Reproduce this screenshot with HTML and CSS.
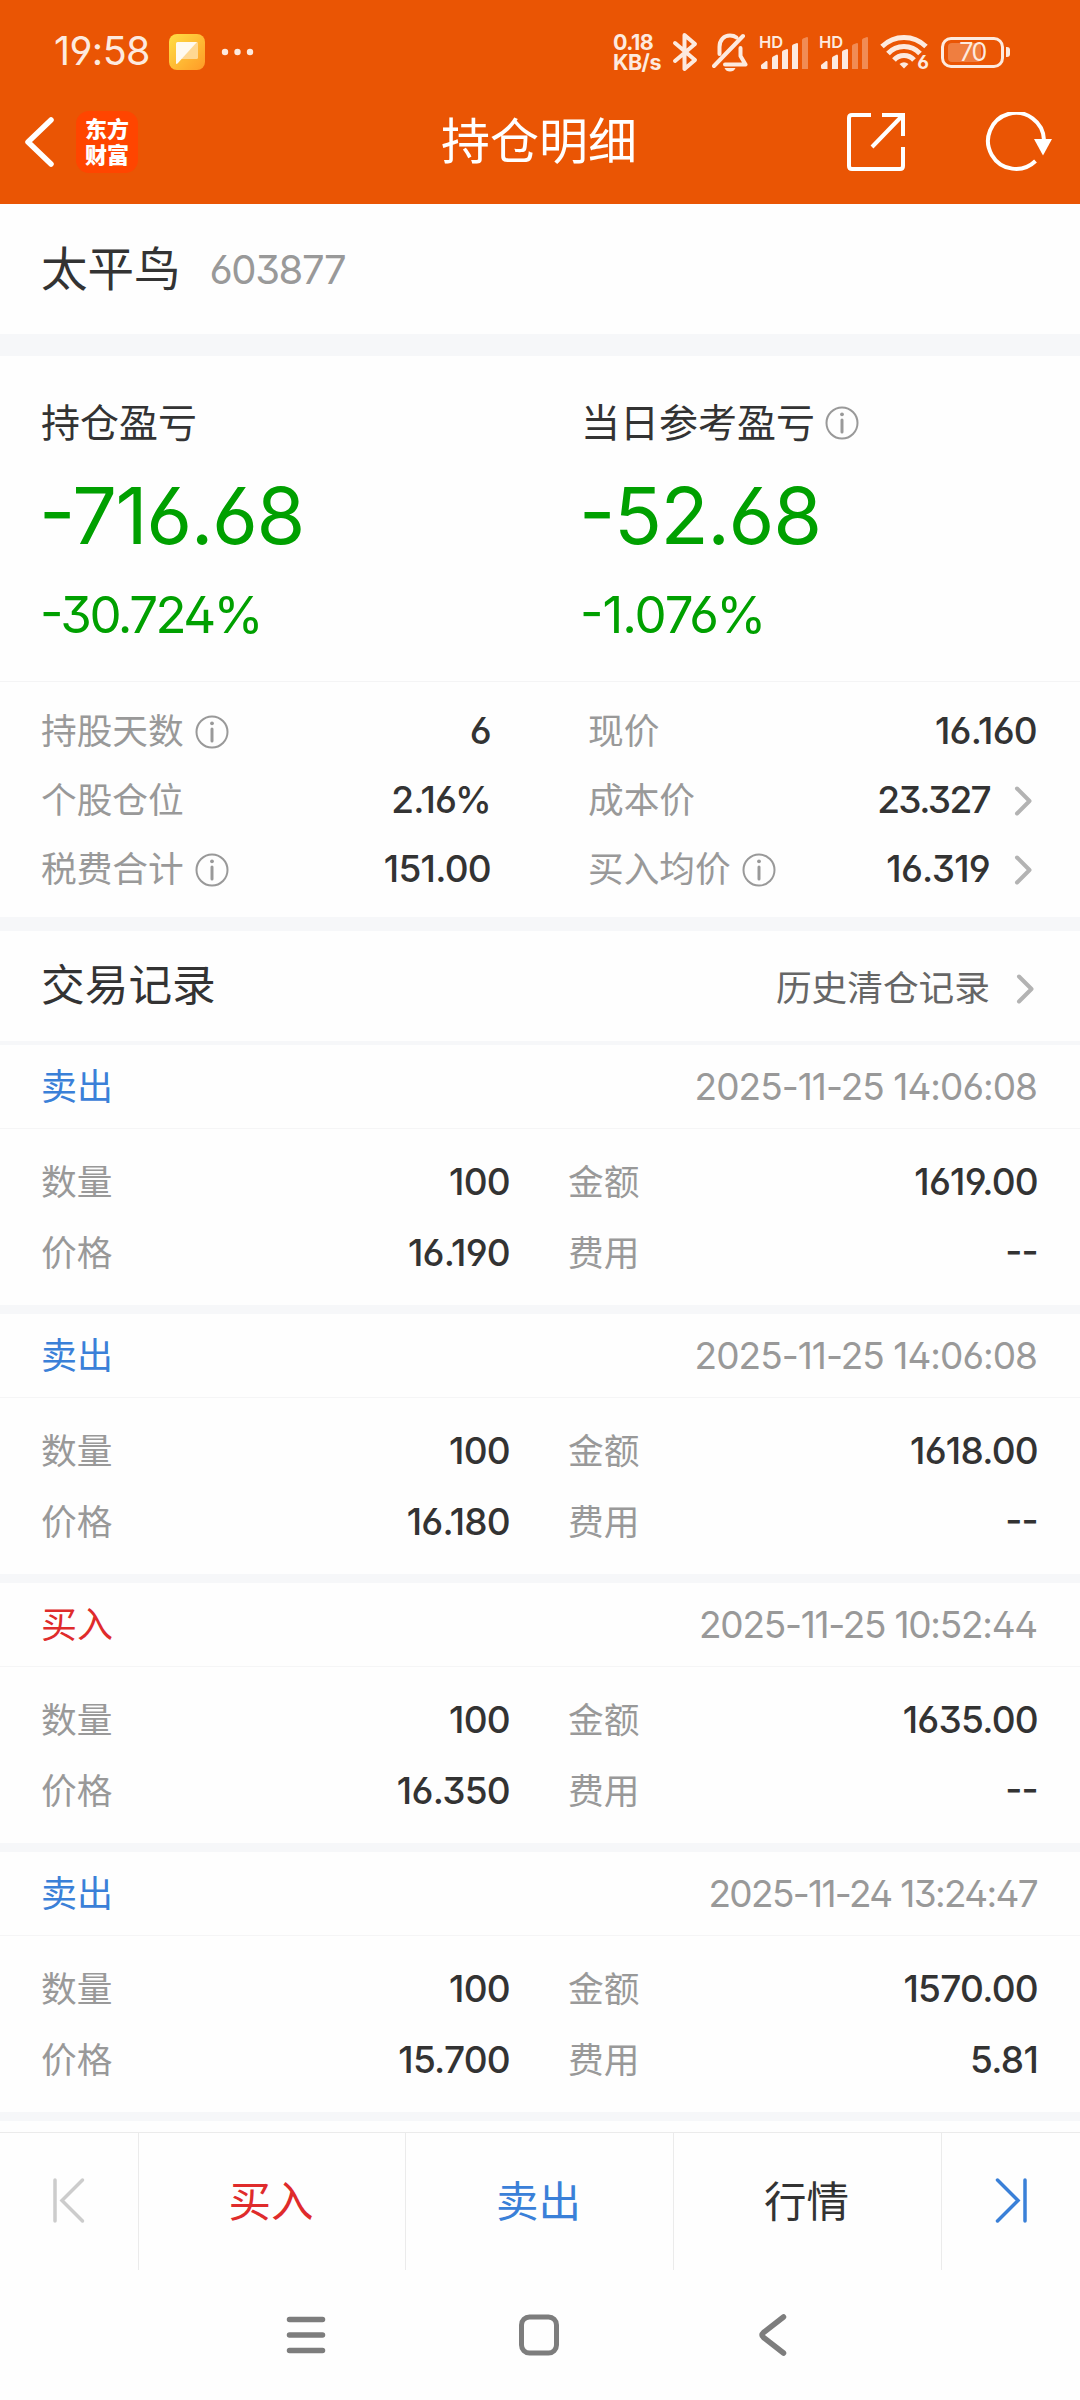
FILE: index.html
```html
<!DOCTYPE html>
<html lang="zh-CN">
<head>
<meta charset="utf-8">
<title>持仓明细</title>
<link rel="stylesheet" href="styles.css">
</head>
<body>
<svg class="defs" width="0" height="0" aria-hidden="true">
  <symbol id="info" viewBox="0 0 34 34">
    <circle cx="17" cy="17" r="15.500" fill="none" stroke="#999" stroke-width="2"/>
    <circle cx="17" cy="8.300" r="1.900" fill="#999"/>
    <path d="M17 14v12" stroke="#999" stroke-width="3" stroke-linecap="round"/>
  </symbol>
  <symbol id="chevron" viewBox="0 0 18 32">
    <path d="M3 3.500L15.500 16L3 28.500" fill="none" stroke="#b3b3b3" stroke-width="4" stroke-linecap="round" stroke-linejoin="round"/>
  </symbol>
</svg>

<header class="header">
  <div class="status">
    <span class="clock">19:58</span>
    <svg class="note" width="36" height="36" viewBox="0 0 36 36">
      <defs><linearGradient id="g" x1="0" y1="0" x2="1" y2="1"><stop offset="0" stop-color="#ffdf45"/><stop offset="1" stop-color="#ff9a26"/></linearGradient></defs>
      <rect width="36" height="36" rx="8" fill="url(#g)"/>
      <path d="M12 25L27 8h1q1 0 1 1.500V23.500q0 1.500-1.500 1.500z" fill="#ffd891"/>
      <path d="M7 9.500Q7 8 8.500 8H28L8.500 29.500q-1.500 1-1.500-.5z" fill="#fffaf0"/>
    </svg>
    <svg class="dots" width="34" height="8" viewBox="0 0 34 8" fill="#fdeadf"><circle cx="4" cy="4" r="3.200"/><circle cx="16.500" cy="4" r="3.200"/><circle cx="29" cy="4" r="3.200"/></svg>
    <div class="rate"><span>0.18</span><span>KB/s</span></div>
    <svg class="bt" width="26" height="40" viewBox="0 0 26 40" fill="none" stroke="#fdeadf" stroke-width="4" stroke-linejoin="round" stroke-linecap="round"><path d="M3 11L23 28L12.500 37V3L23 12L3 29"/></svg>
    <svg class="bell" width="36" height="40" viewBox="0 0 36 40" fill="none" stroke="#fdeadf" stroke-width="4" stroke-linecap="round" stroke-linejoin="round">
      <path d="M2 34L31 4"/><path d="M7.500 22V15C7.500 8 12 3.500 18 3.500q4 0 6.500 2"/><path d="M28.500 16v8l5 8.500H13"/><path d="M12.500 36h11q-1.500 3.500-5.500 3.500t-5.500-3.500z" fill="#fdeadf" stroke="none"/>
    </svg>
    <div class="signal">
      <span class="hd">HD</span>
      <svg width="50" height="36" viewBox="0 0 50 36" fill="#fdeadf"><path d="M2 31l5-4q1.500-.5 1.500 1v7H3.500Q2 35 2 33.500zM13 24q0-1 1-1.500l4-2q1 0 1 1.500v13h-6zM23 18q0-1 1-1.500l4-1.500q1 0 1 1V35h-6zM33 12q0-1 1-1.500l4-1.500q1 0 1 1V35h-6z"/><path d="M43 6q0-1 1-1.500l4-1.500q1 0 1 1V35h-6z" fill-opacity=".37"/></svg>
    </div>
    <div class="signal">
      <span class="hd">HD</span>
      <svg width="50" height="36" viewBox="0 0 50 36" fill="#fdeadf"><path d="M2 31l5-4q1.500-.5 1.500 1v7H3.500Q2 35 2 33.500zM13 24q0-1 1-1.500l4-2q1 0 1 1.500v13h-6zM23 18q0-1 1-1.500l4-1.500q1 0 1 1V35h-6z"/><path d="M33 12q0-1 1-1.500l4-1.500q1 0 1 1V35h-6zM43 6q0-1 1-1.500l4-1.500q1 0 1 1V35h-6z" fill-opacity=".37"/></svg>
    </div>
    <div class="wifi">
      <svg width="48" height="36" viewBox="0 0 48 36" fill="none" stroke="#fdeadf" stroke-width="5"><path d="M2 12.500Q11.500 3.500 24 3.500T46 12.500"/><path d="M8 19.500Q14.500 12.500 24 12.500T40 19.500"/><path d="M14 26Q18 21.500 24 21.500T34 26"/><path d="M19.500 30Q24 26.500 28.500 30L24 34.500z" fill="#fdeadf" stroke="none"/></svg>
      <span>6</span>
    </div>
    <div class="battery"><i class="level"></i><span>70</span></div>
    <i class="nub"></i>
  </div>
  <nav class="titlebar">
    <svg class="back" width="34" height="52" viewBox="0 0 34 52"><path d="M29 4L6 26L29 48" fill="none" stroke="#fff" stroke-width="5.500" stroke-linecap="round" stroke-linejoin="round"/></svg>
    <div class="logo"><span>东方</span><span>财富</span></div>
    <h1>持仓明细</h1>
    <svg class="share" width="60" height="60" viewBox="0 0 60 60" fill="none" stroke="#fff" stroke-width="4"><path d="M25 3H6Q3 3 3 6V54Q3 57 6 57H54Q57 57 57 54V35"/><path d="M36 3H57V24M56 4L26 35"/></svg>
    <svg class="refresh" width="68" height="60" viewBox="0 0 68 60"><path d="M50.500 49A28 28 0 1 1 59 28" fill="none" stroke="#fff" stroke-width="4"/><path d="M49 27H67L58 43.500z" fill="#fff"/></svg>
  </nav>
</header>

<section class="stock"><span class="name">太平鸟</span><span class="code">603877</span></section>

<section class="profit">
  <div><h2>持仓盈亏</h2><p class="big">-716.68</p><p class="pct">-30.724%</p></div>
  <div><h2>当日参考盈亏<svg class="info"><use href="#info"/></svg></h2><p class="big">-52.68</p><p class="pct wide">-1.076%</p></div>
</section>

<section class="detail">
  <div class="row"><span>持股天数</span><svg class="info"><use href="#info"/></svg><b>6</b></div>
  <div class="row"><span>现价</span><b>16.160</b></div>
  <div class="row"><span>个股仓位</span><b>2.16%</b></div>
  <div class="row link"><span>成本价</span><b class="tight">23.327</b><svg class="chev"><use href="#chevron"/></svg></div>
  <div class="row"><span>税费合计</span><svg class="info"><use href="#info"/></svg><b>151.00</b></div>
  <div class="row link"><span>买入均价</span><svg class="info"><use href="#info"/></svg><b>16.319</b><svg class="chev"><use href="#chevron"/></svg></div>
</section>

<section class="history"><h3>交易记录</h3><a>历史清仓记录<svg class="chev"><use href="#chevron"/></svg></a></section>

<main class="records">
  <article class="record">
    <header><span class="sell">卖出</span><time>2025-11-25 14:06:08</time></header>
    <dl><dt>数量</dt><dd>100</dd><dt>金额</dt><dd>1619.00</dd><dt>价格</dt><dd>16.190</dd><dt>费用</dt><dd class="none">--</dd></dl>
  </article>
  <article class="record">
    <header><span class="sell">卖出</span><time>2025-11-25 14:06:08</time></header>
    <dl><dt>数量</dt><dd>100</dd><dt>金额</dt><dd>1618.00</dd><dt>价格</dt><dd>16.180</dd><dt>费用</dt><dd class="none">--</dd></dl>
  </article>
  <article class="record">
    <header><span class="buy">买入</span><time class="snug">2025-11-25 10:52:44</time></header>
    <dl><dt>数量</dt><dd>100</dd><dt>金额</dt><dd>1635.00</dd><dt>价格</dt><dd>16.350</dd><dt>费用</dt><dd class="none">--</dd></dl>
  </article>
  <article class="record">
    <header><span class="sell">卖出</span><time class="tight">2025-11-24 13:24:47</time></header>
    <dl><dt>数量</dt><dd>100</dd><dt>金额</dt><dd>1570.00</dd><dt>价格</dt><dd>15.700</dd><dt>费用</dt><dd>5.81</dd></dl>
  </article>
</main>

<footer class="toolbar">
  <div class="cell first"><svg width="36" height="50" viewBox="0 0 36 50" fill="none" stroke="#ccc" stroke-width="3.500" stroke-linecap="round"><path d="M4 5V46M31.500 5L11 25.500L31.500 46"/></svg></div>
  <div class="cell buy">买入</div>
  <div class="cell sell">卖出</div>
  <div class="cell">行情</div>
  <div class="cell last"><svg width="36" height="50" viewBox="0 0 36 50" fill="none" stroke="#3a80d8" stroke-width="3.500" stroke-linecap="round"><path d="M32 5V46M4.500 5L25 25.500L4.500 46"/></svg></div>
</footer>

<nav class="sysnav">
  <svg width="42" height="44" viewBox="0 0 42 44" stroke="#7d7d7d" stroke-width="5.500" stroke-linecap="round"><path d="M4.500 6.500h33M4.500 22h33M4.500 37.500h33"/></svg>
  <svg class="home" width="42" height="44" viewBox="0 0 42 44" fill="none" stroke="#7d7d7d" stroke-width="5"><rect x="3.500" y="4" width="35" height="36" rx="8"/></svg>
  <svg width="30" height="44" viewBox="0 0 30 44" fill="none" stroke="#7d7d7d" stroke-width="5.500" stroke-linecap="round" stroke-linejoin="round"><path d="M25.500 4L5.500 19.500Q2.500 22 5.500 24.500L25.500 40"/></svg>
</nav>
</body>
</html>
```
FILE: styles.css
```css
* { box-sizing: border-box; margin: 0; padding: 0; }
body {
  width: 1080px; height: 2400px; overflow: hidden;
  display: flex; flex-direction: column;
  background: #fefefe; color: #333;
  font-family: Inter, "Noto Sans CJK SC", sans-serif;
  font-feature-settings: "ss01";
  font-size: 36px; line-height: 1.3;
}
h1, h2, h3, b { font-weight: 400; }
svg { display: block; flex: none; }
.defs { position: absolute; }
.info { width: 34px; height: 34px; }
.chev { width: 18px; height: 32px; }
.sell { color: #3a80d8; }
.buy { color: #df2b2b; }

/* header */
.header { height: 204px; background: #ea5504; color: #fff; }
.status { height: 80px; padding: 24px 0 0 54px; display: flex; align-items: center; color: #fdeadf; }
.clock { width: 115px; font-size: 39.5px; letter-spacing: -0.015em; }
.dots { margin-left: 16px; }
.rate { width: 58px; margin-left: 358px; display: flex; flex-direction: column; font-size: 21.5px; line-height: 20px; font-weight: 700; letter-spacing: -0.025em; }
.bt { margin-left: 1px; }
.bell { margin-left: 14px; }
.signal { width: 50px; height: 36px; margin-left: 11px; display: grid; }
.signal > * { grid-area: 1 / 1; }
.signal + .signal { margin-left: 10px; }
.hd { font-size: 16.5px; line-height: 16px; font-weight: 600; }
.wifi { width: 48px; height: 36px; margin-left: 11px; display: grid; }
.wifi > * { grid-area: 1 / 1; }
.wifi span { justify-self: end; align-self: end; font-size: 19px; line-height: 14px; font-weight: 700; margin-right: -1px; }
.battery { width: 63px; height: 31px; margin-left: 13px; border: 3px solid #fdeadf; border-radius: 10px; display: grid; align-items: center; padding: 0 4px; }
.battery > * { grid-area: 1 / 1; }
.battery span { text-align: center; font-size: 25px; line-height: 25px; letter-spacing: -0.06em; }
.level { width: 33px; height: 19px; border-radius: 4px; background: rgba(253, 234, 223, .28); }
.nub { width: 4px; height: 10px; margin-left: 2px; border-radius: 0 3px 3px 0; background: #fdeadf; }

.titlebar { height: 124px; padding-left: 22px; display: grid; grid-template-columns: 54px 365px 405px 139px 1fr; align-items: center; }
.logo { width: 62px; height: 62px; border-radius: 13px; background: #ff4500; display: flex; flex-direction: column; align-items: center; justify-content: center; }
.logo span { font-size: 22px; line-height: 26px; font-weight: 900; }
h1 { font-size: 49px; line-height: 60px; }

.stock { height: 152px; padding: 1px 0 22px 41px; display: flex; align-items: center; gap: 29px; box-shadow: inset 0 -22px #f6f7f9; }
.name { font-size: 46.5px; }
.code { font-size: 40px; letter-spacing: -0.035em; color: #999; }

.profit { height: 326px; padding: 42px 0 0 41px; display: grid; grid-template-columns: 540px 1fr; border-bottom: 1px solid #f4f4f5; }
h2 { display: flex; align-items: center; gap: 10px; font-size: 39px; line-height: 50px; }
.big, .pct { color: #00a000; font-feature-settings: "ss01", "case"; }
.big { font-size: 79px; line-height: 96px; letter-spacing: -0.018em; margin-top: 19px; margin-left: -2px; }
.pct { font-size: 51px; line-height: 62px; letter-spacing: -0.05em; margin-top: 21px; margin-left: -1px; }
.pct.wide { letter-spacing: -0.02em; }

.detail { height: 249px; padding: 15px 42px 27px 41px; display: grid; grid-template: repeat(3, 69px) / 450px 449px; column-gap: 97px; box-shadow: inset 0 -14px #f6f7f9; }
.row { display: flex; align-items: center; color: #999; font-size: 35.7px; }
.row .info { margin-left: 11px; }
.row b { margin-left: auto; color: #333; font-size: 37px; font-weight: 450; letter-spacing: -0.02em; }
.row b.tight { letter-spacing: -0.045em; }
.row .chev { margin-left: 24px; margin-right: 5px; }

.history { height: 114px; padding: 0 46px 0 41px; display: flex; align-items: center; justify-content: space-between; border-bottom: 4px solid #f6f7f9; }
h3 { font-size: 43.7px; }
.history a { display: flex; align-items: center; gap: 26px; padding-top: 5px; font-size: 35.7px; color: #666; }

/* trade records */
.record { height: 269px; border-bottom: 9px solid #f6f7f9; }
.record header { height: 84px; padding: 2px 43px 0 41px; display: flex; align-items: center; justify-content: space-between; border-bottom: 1px solid #f5f5f6; }
time { color: #999; font-size: 37px; letter-spacing: -0.026em; }
time.snug { letter-spacing: -0.034em; }
time.tight { letter-spacing: -0.045em; }
dl { padding: 18px 42px 0 41px; display: grid; grid-template: 71px 71px / 100px 369px 158px 1fr; align-items: center; }
dt { color: #999; font-size: 35.7px; }
dt:nth-of-type(even) { padding-left: 58px; }
dd { text-align: right; font-size: 37px; font-weight: 450; letter-spacing: -0.02em; font-feature-settings: "ss01", "case"; }

.toolbar { height: 138px; margin-top: 11px; border-top: 1px solid #ebebeb; display: grid; grid-template-columns: 139px 267px 268px 268px 1fr; font-size: 42.5px; }
.cell { display: flex; align-items: center; justify-content: center; padding-right: 2px; border-right: 1px solid #ebebeb; }
.cell.first { padding: 0 0 4px; }
.cell.last { padding: 0 0 4px; border: 0; }
.sysnav { flex: 1; padding: 0 292px 0 285px; display: flex; align-items: center; justify-content: space-between; }
.home { margin-right: 8px; }
```
